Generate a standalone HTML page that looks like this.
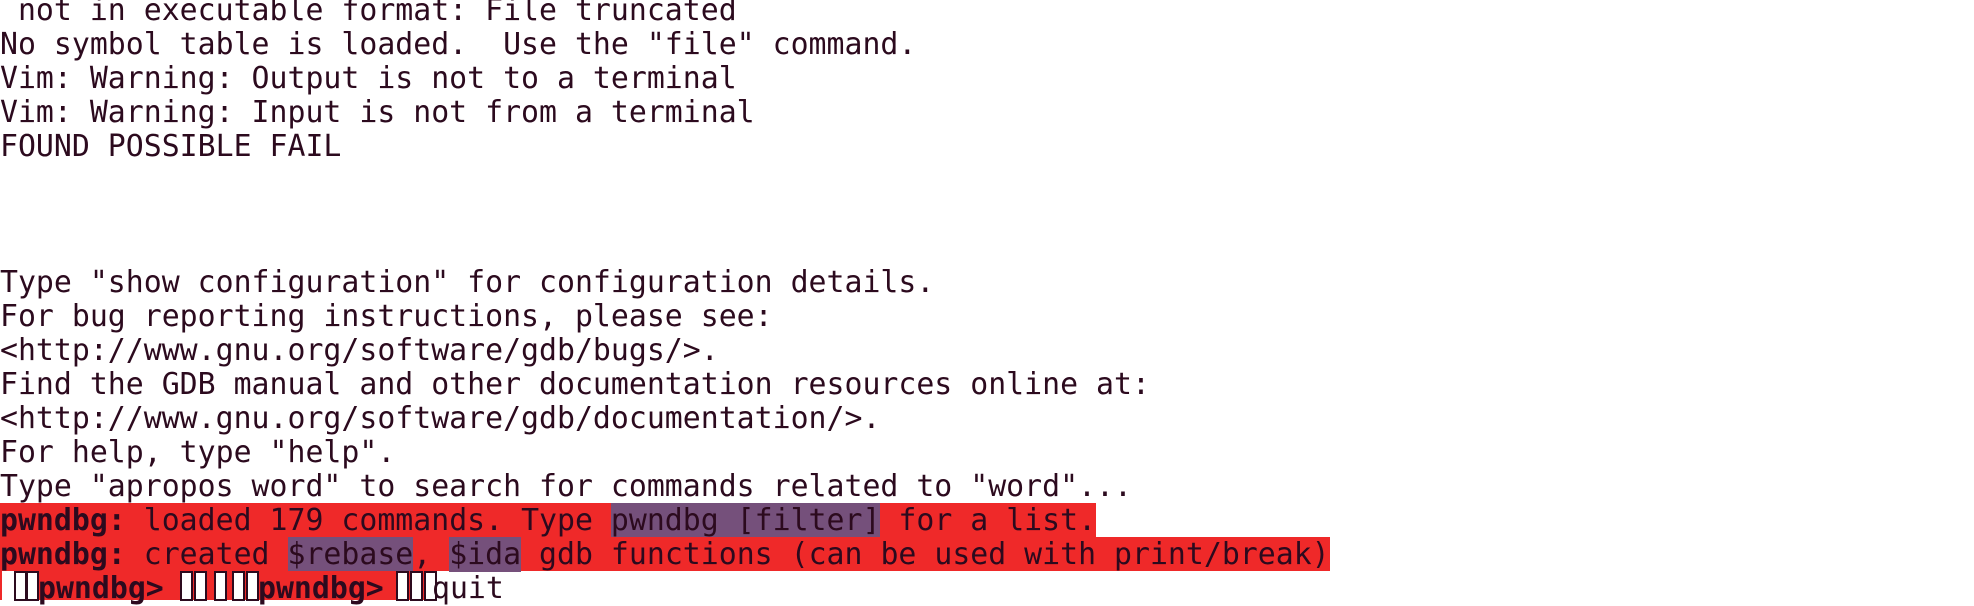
<!DOCTYPE html>
<html><head><meta charset="utf-8"><style>
body{margin:0;width:1974px;height:600px;background:#fff;overflow:hidden;position:relative;
font-family:"DejaVu Sans Mono","Liberation Mono",monospace;font-size:29.85px;color:#2c0a1e}
.l{position:absolute;left:0;height:34px;line-height:34px;white-space:pre}
.t{position:absolute;left:0;top:1px;width:100%}
.r{background:#ef2929}
.p{background:#75507b}
b{font-weight:bold}
.bx{display:inline-block;width:13px;height:30px;border:2px solid #2c0a1e;box-sizing:border-box;vertical-align:middle;background:#fff}
</style></head><body>
<div class="l" style="top:-6px"> not in executable format: File truncated</div>
<div class="l" style="top:28px">No symbol table is loaded.  Use the "file" command.</div>
<div class="l" style="top:62px">Vim: Warning: Output is not to a terminal</div>
<div class="l" style="top:96px">Vim: Warning: Input is not from a terminal</div>
<div class="l" style="top:130px">FOUND POSSIBLE FAIL</div>
<div class="l" style="top:266px">Type "show configuration" for configuration details.</div>
<div class="l" style="top:300px">For bug reporting instructions, please see:</div>
<div class="l" style="top:334px">&lt;http://www.gnu.org/software/gdb/bugs/&gt;.</div>
<div class="l" style="top:368px">Find the GDB manual and other documentation resources online at:</div>
<div class="l" style="top:402px">&lt;http://www.gnu.org/software/gdb/documentation/&gt;.</div>
<div class="l" style="top:436px">For help, type "help".</div>
<div class="l" style="top:470px">Type "apropos word" to search for commands related to "word"...</div>
<div class="l r" style="top:503px;padding-top:1px;height:33px;line-height:34px"><b>pwndbg:</b> loaded 179 commands. Type <span class="p">pwndbg [filter]</span> for a list.</div>
<div class="l r" style="top:537px;padding-top:1px;height:33px;line-height:34px"><b>pwndbg:</b> created <span class="p">$rebase</span>, <span class="p">$ida</span> gdb functions (can be used with print/break)</div>
<div class="r" style="position:absolute;top:571px;left:0;width:432px;height:29px"></div>
<div style="position:absolute;top:571px;left:0"><span class="bx" style="position:absolute;left:2px;border-color:#fff;background:#fff"></span><span class="bx" style="position:absolute;left:14px"></span><span class="bx" style="position:absolute;left:26px"></span>
<span class="bx" style="position:absolute;left:180px"></span><span class="bx" style="position:absolute;left:194px"></span><span class="bx" style="position:absolute;left:214px"></span><span class="bx" style="position:absolute;left:232px"></span><span class="bx" style="position:absolute;left:246px"></span>
<span class="bx" style="position:absolute;left:396px"></span><span class="bx" style="position:absolute;left:410px"></span><span class="bx" style="position:absolute;left:424px"></span></div>
<div class="l" style="top:572px;left:38px"><b>pwndbg&gt;</b></div>
<div class="l" style="top:572px;left:258px"><b>pwndbg&gt;</b></div>
<div class="l" style="top:572px;left:432px">quit</div>
</body></html>
